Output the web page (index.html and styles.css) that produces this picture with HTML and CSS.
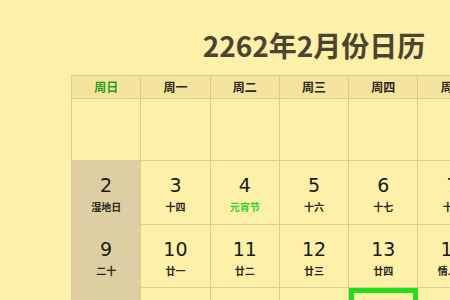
FILE: index.html
```html
<!DOCTYPE html>
<html lang="zh">
<head>
<meta charset="utf-8">
<link rel="stylesheet" href="styles.css">
</head>
<body>
<div class="page">
  <h1 class="title">2262年2月份日历</h1>
  <div class="cal">
    <div class="hd sun">周日</div>
    <div class="hd">周一</div>
    <div class="hd">周二</div>
    <div class="hd">周三</div>
    <div class="hd">周四</div>
    <div class="hd">周五</div>
    <div class="hd">周六</div>

    <div class="cell"></div>
    <div class="cell"></div>
    <div class="cell"></div>
    <div class="cell"></div>
    <div class="cell"></div>
    <div class="cell"></div>
    <div class="cell"><div class="num">1</div><div class="sub">十二</div></div>

    <div class="cell wk"><div class="num">2</div><div class="sub">湿地日</div></div>
    <div class="cell"><div class="num">3</div><div class="sub">十四</div></div>
    <div class="cell"><div class="num">4</div><div class="sub fest">元宵节</div></div>
    <div class="cell"><div class="num">5</div><div class="sub">十六</div></div>
    <div class="cell"><div class="num">6</div><div class="sub">十七</div></div>
    <div class="cell"><div class="num">7</div><div class="sub">十八</div></div>
    <div class="cell"><div class="num">8</div><div class="sub">十九</div></div>

    <div class="cell wk"><div class="num">9</div><div class="sub">二十</div></div>
    <div class="cell"><div class="num">10</div><div class="sub">廿一</div></div>
    <div class="cell"><div class="num">11</div><div class="sub">廿二</div></div>
    <div class="cell"><div class="num">12</div><div class="sub">廿三</div></div>
    <div class="cell"><div class="num">13</div><div class="sub">廿四</div></div>
    <div class="cell"><div class="num">14</div><div class="sub">情人节</div></div>
    <div class="cell"><div class="num">15</div><div class="sub">廿六</div></div>

    <div class="cell wk"><div class="num">16</div><div class="sub">廿七</div></div>
    <div class="cell"><div class="num">17</div><div class="sub">廿八</div></div>
    <div class="cell"><div class="num">18</div><div class="sub">廿九</div></div>
    <div class="cell"><div class="num">19</div><div class="sub">三十</div></div>
    <div class="cell today"><div class="num">20</div><div class="sub">二月</div></div>
    <div class="cell"><div class="num">21</div><div class="sub">初二</div></div>
    <div class="cell"><div class="num">22</div><div class="sub">初三</div></div>
  </div>
</div>
</body>
</html>
```

FILE: styles.css
```css
html, body {
  margin: 0;
  padding: 0;
  background: #fdf0a9;
  overflow: hidden;
}
.page {
  width: 626px;
  padding: 25px 0 0 71px;
}
.title {
  margin: 0 0 10px 0;
  width: 486px;
  text-align: center;
  font-family: "Noto Sans CJK SC", "Noto Sans", sans-serif;
  font-size: 28px;
  line-height: 40px;
  font-weight: 700;
  color: #4b4431;
}
.cal {
  display: grid;
  grid-template-columns: repeat(7, 69.3px);
  grid-template-rows: 23px 62px 64px 63px 63px;
  border-left: 1px solid #dccb8a;
  border-top: 1px solid #dccb8a;
  width: max-content;
}
.hd, .cell {
  border-right: 1px solid #dccb8a;
  border-bottom: 1px solid #dccb8a;
  box-sizing: border-box;
  text-align: center;
}
.hd {
  background: #f5e49e;
  font-family: "Noto Sans CJK SC", sans-serif;
  font-size: 12px;
  font-weight: 700;
  line-height: 22px;
  color: #2a2618;
}
.hd.sun {
  color: #1fa11f;
}
.cell {
  padding-top: 13px;
}
.cell.wk {
  background: #ddcfa3;
}
.cell.today {
  border: 5px solid #22dd1c;
}
.num {
  font-family: "DejaVu Sans", sans-serif;
  font-size: 19px;
  line-height: 22px;
  color: #1c1a14;
}
.sub {
  margin-top: 4px;
  font-family: "Noto Sans CJK SC", sans-serif;
  font-size: 10px;
  line-height: 14px;
  font-weight: 700;
  color: #2a2618;
}
.sub.fest {
  color: #2ed52e;
}
```
